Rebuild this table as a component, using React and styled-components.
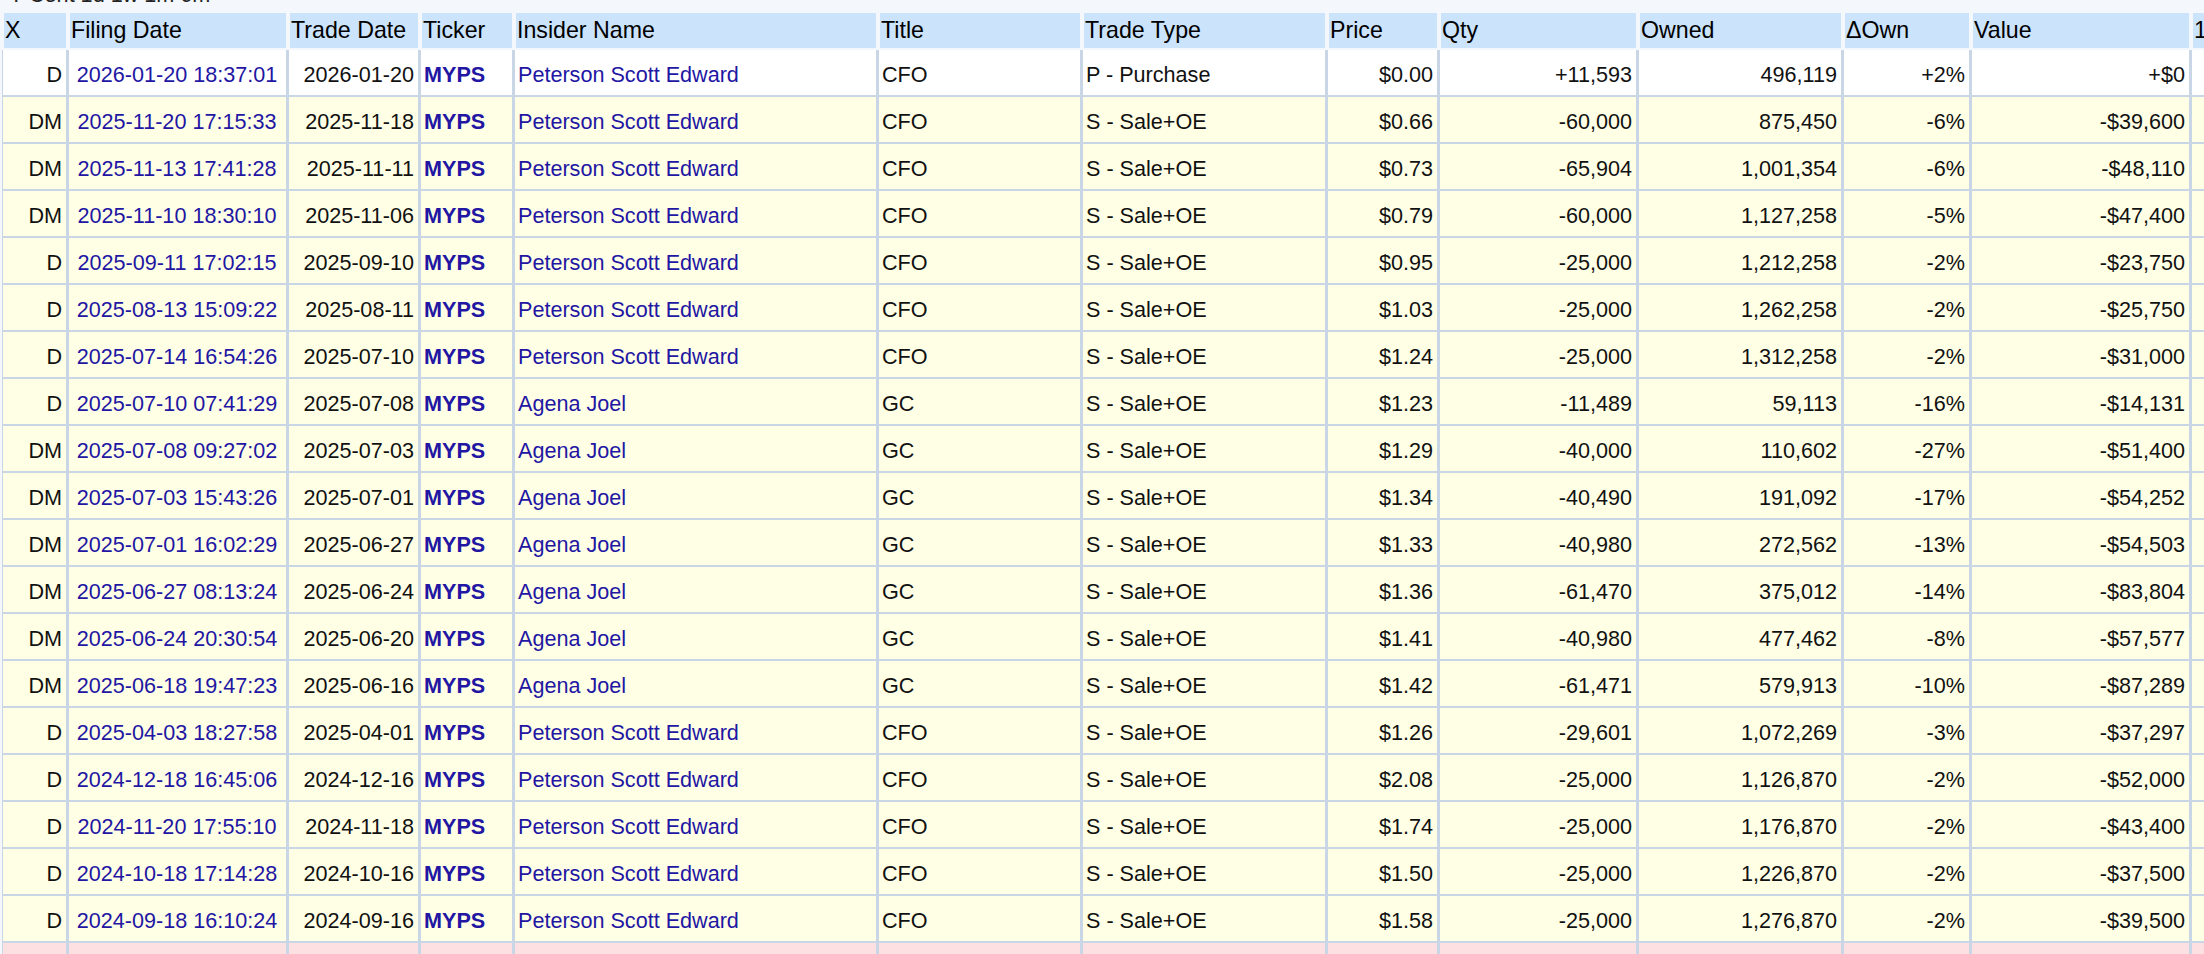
import React from 'react';
import styled, { createGlobalStyle } from 'styled-components';

const PAGE = '#f4f7fb';
const GRID = '#c8d6e6';
const LINK = '#2216a3';

const TONES = {
  white: '#ffffff',
  yellow: '#ffffe6',
  pink: '#fde0e2',
};

const GlobalStyle = createGlobalStyle`
  html, body {
    margin: 0;
    padding: 0;
    background: ${PAGE};
    overflow: hidden;
  }
  body {
    font-family: "Liberation Sans", Arial, Helvetica, sans-serif;
    color: #111;
  }
`;

const Page = styled.div`
  width: 2204px;
  height: 954px;
  overflow: hidden;
`;

// only the bottom of this line shows above the table
const Caption = styled.div`
  height: 6px;
  overflow: hidden;
  display: flex;
  align-items: flex-end;
  padding-left: 9px;
  font-size: 21.6px;
  line-height: 21.6px;
  color: #222;
  white-space: nowrap;
`;

const Table = styled.table`
  margin: 7px 0 0 2px;
  border-collapse: separate;
  border-spacing: 0;
  table-layout: fixed;
  width: ${(p) => p.$width}px;
`;

const Th = styled.th`
  box-sizing: border-box;
  width: ${(p) => p.$w}px;
  background: #cbe3fb;
  border-style: solid;
  border-color: ${PAGE};
  border-width: 0 2px 2px 2px;
  padding: 0 1px;
  font-size: 23.2px;
  font-weight: normal;
  line-height: 35px;
  text-align: left;
  color: #000;
  white-space: nowrap;
  overflow: hidden;
`;

const Row = styled.tr`
  background: ${(p) => TONES[p.$tone]};
`;

const Td = styled.td`
  box-sizing: border-box;
  border-style: solid;
  border-color: ${GRID};
  border-width: 0 2px 2px 1px;
  padding: 5px 4px 0 3px;
  font-size: 21.6px;
  line-height: 40px;
  white-space: nowrap;
  overflow: hidden;
  text-align: ${(p) => p.$align || 'left'};
`;

const Link = styled.a`
  color: ${LINK};
  text-decoration: none;
  font-weight: ${(p) => (p.$bold ? 700 : 400)};
`;

const columns = [
  { key: 'x', label: 'X', w: 66, align: 'right' },
  { key: 'filed', label: 'Filing Date', w: 220, align: 'center', link: true },
  { key: 'traded', label: 'Trade Date', w: 132, align: 'right' },
  { key: 'ticker', label: 'Ticker', w: 94, link: true, bold: true },
  { key: 'name', label: 'Insider Name', w: 364, link: true },
  { key: 'title', label: 'Title', w: 204 },
  { key: 'type', label: 'Trade Type', w: 245 },
  { key: 'price', label: 'Price', w: 112, align: 'right' },
  { key: 'qty', label: 'Qty', w: 199, align: 'right' },
  { key: 'owned', label: 'Owned', w: 205, align: 'right' },
  { key: 'delta', label: '\u0394Own', w: 128, align: 'right' },
  { key: 'value', label: 'Value', w: 220, align: 'right' },
  { key: 'd1', label: '1d', w: 100, align: 'right' },
  { key: 'w1', label: '1w', w: 100, align: 'right' },
  { key: 'm1', label: '1m', w: 100, align: 'right' },
  { key: 'm6', label: '6m', w: 100, align: 'right' },
];

const PSE = 'Peterson Scott Edward';
const AJ = 'Agena Joel';
const SALE = 'S - Sale+OE';

const trade = (x, filed, traded, name, title, type, price, qty, owned, delta, value) => ({
  x, filed, traded, ticker: 'MYPS', name, title, type, price, qty, owned, delta, value,
});

const rows = [
  { tone: 'white', ...trade('D', '2026-01-20 18:37:01', '2026-01-20', PSE, 'CFO', 'P - Purchase', '$0.00', '+11,593', '496,119', '+2%', '+$0') },
  { tone: 'yellow', ...trade('DM', '2025-11-20 17:15:33', '2025-11-18', PSE, 'CFO', SALE, '$0.66', '-60,000', '875,450', '-6%', '-$39,600') },
  { tone: 'yellow', ...trade('DM', '2025-11-13 17:41:28', '2025-11-11', PSE, 'CFO', SALE, '$0.73', '-65,904', '1,001,354', '-6%', '-$48,110') },
  { tone: 'yellow', ...trade('DM', '2025-11-10 18:30:10', '2025-11-06', PSE, 'CFO', SALE, '$0.79', '-60,000', '1,127,258', '-5%', '-$47,400') },
  { tone: 'yellow', ...trade('D', '2025-09-11 17:02:15', '2025-09-10', PSE, 'CFO', SALE, '$0.95', '-25,000', '1,212,258', '-2%', '-$23,750') },
  { tone: 'yellow', ...trade('D', '2025-08-13 15:09:22', '2025-08-11', PSE, 'CFO', SALE, '$1.03', '-25,000', '1,262,258', '-2%', '-$25,750') },
  { tone: 'yellow', ...trade('D', '2025-07-14 16:54:26', '2025-07-10', PSE, 'CFO', SALE, '$1.24', '-25,000', '1,312,258', '-2%', '-$31,000') },
  { tone: 'yellow', ...trade('D', '2025-07-10 07:41:29', '2025-07-08', AJ, 'GC', SALE, '$1.23', '-11,489', '59,113', '-16%', '-$14,131') },
  { tone: 'yellow', ...trade('DM', '2025-07-08 09:27:02', '2025-07-03', AJ, 'GC', SALE, '$1.29', '-40,000', '110,602', '-27%', '-$51,400') },
  { tone: 'yellow', ...trade('DM', '2025-07-03 15:43:26', '2025-07-01', AJ, 'GC', SALE, '$1.34', '-40,490', '191,092', '-17%', '-$54,252') },
  { tone: 'yellow', ...trade('DM', '2025-07-01 16:02:29', '2025-06-27', AJ, 'GC', SALE, '$1.33', '-40,980', '272,562', '-13%', '-$54,503') },
  { tone: 'yellow', ...trade('DM', '2025-06-27 08:13:24', '2025-06-24', AJ, 'GC', SALE, '$1.36', '-61,470', '375,012', '-14%', '-$83,804') },
  { tone: 'yellow', ...trade('DM', '2025-06-24 20:30:54', '2025-06-20', AJ, 'GC', SALE, '$1.41', '-40,980', '477,462', '-8%', '-$57,577') },
  { tone: 'yellow', ...trade('DM', '2025-06-18 19:47:23', '2025-06-16', AJ, 'GC', SALE, '$1.42', '-61,471', '579,913', '-10%', '-$87,289') },
  { tone: 'yellow', ...trade('D', '2025-04-03 18:27:58', '2025-04-01', PSE, 'CFO', SALE, '$1.26', '-29,601', '1,072,269', '-3%', '-$37,297') },
  { tone: 'yellow', ...trade('D', '2024-12-18 16:45:06', '2024-12-16', PSE, 'CFO', SALE, '$2.08', '-25,000', '1,126,870', '-2%', '-$52,000') },
  { tone: 'yellow', ...trade('D', '2024-11-20 17:55:10', '2024-11-18', PSE, 'CFO', SALE, '$1.74', '-25,000', '1,176,870', '-2%', '-$43,400') },
  { tone: 'yellow', ...trade('D', '2024-10-18 17:14:28', '2024-10-16', PSE, 'CFO', SALE, '$1.50', '-25,000', '1,226,870', '-2%', '-$37,500') },
  { tone: 'yellow', ...trade('D', '2024-09-18 16:10:24', '2024-09-16', PSE, 'CFO', SALE, '$1.58', '-25,000', '1,276,870', '-2%', '-$39,500') },
  { tone: 'pink' },
];

const tableWidth = columns.reduce((sum, c) => sum + c.w, 0);

export default function App() {
  return (
    <Page>
      <GlobalStyle />
      <Caption>
        <span>Y Cent 1d 1w 1m 6m</span>
      </Caption>
      <Table $width={tableWidth}>
        <thead>
          <tr>
            {columns.map((c) => (
              <Th key={c.key} $w={c.w}>
                {c.label}
              </Th>
            ))}
          </tr>
        </thead>
        <tbody>
          {rows.map((r, i) => (
            <Row key={i} $tone={r.tone}>
              {columns.map((c) => {
                const v = r[c.key];
                return (
                  <Td key={c.key} $align={c.align}>
                    {v && c.link ? (
                      <Link href="#" $bold={c.bold}>
                        {v}
                      </Link>
                    ) : (
                      v || '\u00a0'
                    )}
                  </Td>
                );
              })}
            </Row>
          ))}
        </tbody>
      </Table>
    </Page>
  );
}
